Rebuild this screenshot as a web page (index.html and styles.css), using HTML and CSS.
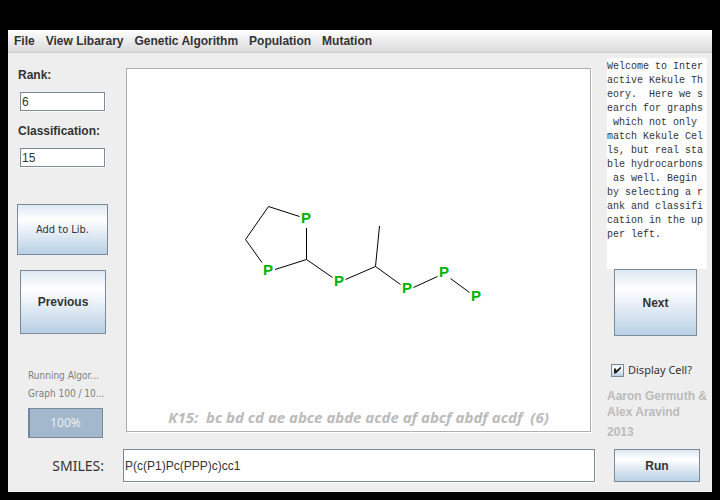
FILE: index.html
```html
<!DOCTYPE html>
<html lang="en">
<head>
<meta charset="utf-8">
<title>Interactive Kekule Theory</title>
<link rel="stylesheet" href="styles.css">
</head>
<body>
<div class="window">
  <nav class="menubar">
    <button class="menu" type="button">File</button>
    <button class="menu" type="button">View Libarary</button>
    <button class="menu" type="button">Genetic Algorithm</button>
    <button class="menu" type="button">Population</button>
    <button class="menu" type="button">Mutation</button>
  </nav>
  <main class="content">
    <section class="left">
      <label class="label" for="rank">Rank:</label>
      <input class="field small-field" id="rank" type="text" value="6">
      <label class="label" for="classification">Classification:</label>
      <input class="field small-field" id="classification" type="text" value="15">
      <button class="button add" type="button">Add to Lib.</button>
      <button class="button previous" type="button">Previous</button>
      <div class="status">
        <p class="status-line">Running Algor...</p>
        <p class="status-line">Graph 100 / 10...</p>
        <div class="progress">
          <progress class="bar" id="progress" value="100" max="100"></progress>
          <label class="percent" for="progress">100%</label>
        </div>
      </div>
    </section>
    <section class="canvas">
      <svg class="molecule" viewBox="127 69 463 338" role="img" aria-label="Molecule graph">
        <g class="bonds">
          <path d="M299.500 216.500L268.500 206.500L245.500 239.500L262 262.500"/>
          <path d="M306.500 228V259.500L275 269.500"/>
          <path d="M306.500 259.500L332.500 277.500"/>
          <path d="M345.500 279.500L375.500 266.500L379.500 226"/>
          <path d="M375.500 266.500L400.500 284.500"/>
          <path d="M413.500 287.500L437.500 276.500"/>
          <path d="M450.500 278.500L469.500 292.500"/>
        </g>
        <g class="atoms">
          <text x="306" y="223">P</text>
          <text x="268" y="275">P</text>
          <text x="339" y="286">P</text>
          <text x="407" y="293">P</text>
          <text x="444" y="277">P</text>
          <text x="476" y="301">P</text>
        </g>
      </svg>
      <p class="caption">K15:  bc bd cd ae abce abde acde af abcf abdf acdf  (6)</p>
    </section>
    <section class="right">
      <textarea class="intro" aria-label="Introduction" readonly>Welcome to Interactive Kekule Theory.  Here we search for graphs which not only match Kekule Cells, but real stable hydrocarbons as well. Begin by selecting a rank and classification in the upper left.</textarea>
      <button class="button next" type="button">Next</button>
      <label class="check"><input class="checkbox" type="checkbox" checked>Display Cell?</label>
      <p class="credits">Aaron Germuth &amp;<br>Alex Aravind</p>
      <p class="year">2013</p>
    </section>
  </main>
  <footer class="footer">
    <label class="smiles-label" for="smiles">SMILES:</label>
    <input class="field" id="smiles" type="text" value="P(c(P1)Pc(PPP)c)cc1">
    <button class="button run" type="button">Run</button>
  </footer>
</div>
</body>
</html>
```
FILE: styles.css
```css
* { box-sizing: border-box; }
body {
  margin: 0;
  min-height: 100vh;
  padding: 30px 8px 8px;
  display: flex;
  background: #000;
  color: #333;
  font: 12px/16px "Liberation Sans", Arial, sans-serif;
}
p { margin: 0; }
button, input, textarea { font: inherit; color: inherit; margin: 0; }
.window { flex: 1; min-width: 0; display: flex; flex-direction: column; background: #eee; }
.menubar {
  display: flex;
  gap: 11px;
  height: 23px;
  padding: 0 6px;
  background: linear-gradient(#fff, #dadada);
  border-bottom: 1px solid #ccc;
}
.menu { padding: 0; border: 0; background: none; font-weight: bold; }
.content { flex: 1; display: grid; grid-template-columns: 118px 1fr 121px; }
.left { display: flex; flex-direction: column; align-items: flex-start; padding: 14px 0 0 9px; }
.label { font-weight: bold; margin-left: 1px; }
.field {
  min-width: 0;
  padding: 0 1px;
  border: 1px solid #7a8a99;
  border-radius: 0;
  background: #fff;
  box-shadow: 1px 1px #fff;
}
.small-field { width: 85px; height: 19px; margin: 9px 0 12px 3px; }
.button {
  padding: 0;
  border: 1px solid #7a8a99;
  background: linear-gradient(#dde8f3, #fff 30%, #b8cfe5);
  font-weight: bold;
}
.add {
  width: 91px;
  height: 51px;
  margin-top: 25px;
  font: 11px/16px "DejaVu Sans Condensed", "DejaVu Sans", sans-serif;
}
.previous { width: 86px; height: 64px; margin: 15px 0 0 3px; }
.status { width: 75px; margin: 33px 0 0 11px; color: #808080; }
.status-line { font: 10px/18px "DejaVu Sans Condensed", "DejaVu Sans", sans-serif; white-space: nowrap; }
.progress { display: grid; height: 30px; margin-top: 5px; }
.bar, .percent { grid-area: 1 / 1; }
.bar { appearance: none; width: 100%; height: 30px; border: 1px solid #7a8a99; background: #eee; }
.bar::-webkit-progress-bar { background: #eee; }
.bar::-webkit-progress-value { background: #a3b8cc; border-left: 1px solid #6382bf; }
.percent { z-index: 1; place-self: center; color: #eee; font: 12px/16px "Noto Sans", sans-serif; }
.canvas {
  display: flex;
  flex-direction: column;
  min-width: 0;
  margin: 15px 0 17px;
  padding-bottom: 4px;
  border: 1px solid #afafaf;
  background: #fff;
  box-shadow: 1px 1px #fff;
}
.molecule { flex: 1; width: 100%; min-height: 0; }
.bonds { fill: none; stroke: #000; stroke-width: 1; }
.atoms { fill: #00b400; font-size: 15px; font-weight: bold; text-anchor: middle; }
.caption {
  color: #bbb;
  font: italic bold 15px/20px "Noto Sans", sans-serif;
  text-align: center;
  white-space: pre;
}
.right { display: flex; flex-direction: column; align-items: flex-start; padding: 5px 5px 0 16px; }
.intro {
  width: 100%;
  height: 211px;
  padding: 2px 0;
  border: 0;
  resize: none;
  overflow: hidden;
  background: #fff;
  font: 10px/14px "Liberation Mono", monospace;
  white-space: break-spaces;
  line-break: anywhere;
}
.next { width: 83px; height: 67px; margin-left: 7px; }
.check {
  display: flex;
  align-items: center;
  gap: 4px;
  margin: 26px 0 0 4px;
  font: 11px/16px "Noto Sans", sans-serif;
  white-space: nowrap;
}
.checkbox {
  appearance: none;
  width: 13px;
  height: 13px;
  border: 1px solid #7a8a99;
  background: linear-gradient(#e4edf6, #fff 30%, #b8cfe5);
}
.checkbox:checked::before {
  content: "";
  display: block;
  width: 11px;
  height: 11px;
  background: #222;
  clip-path: polygon(2px 4px, 4px 4px, 4px 6px, 9px 2px, 9px 4px, 4px 9px, 2px 9px);
}
.credits, .year { color: #bbb; font-weight: bold; white-space: nowrap; }
.credits { margin-top: 10px; }
.year { margin-top: 4px; }
.footer {
  display: grid;
  grid-template-columns: 96px 1fr 86px;
  column-gap: 19px;
  padding: 0 12px 10px 0;
}
.footer .field { height: 33px; }
.smiles-label { align-self: center; text-align: right; font: 14px/16px "Noto Sans", sans-serif; }
.run { height: 33px; }
```
